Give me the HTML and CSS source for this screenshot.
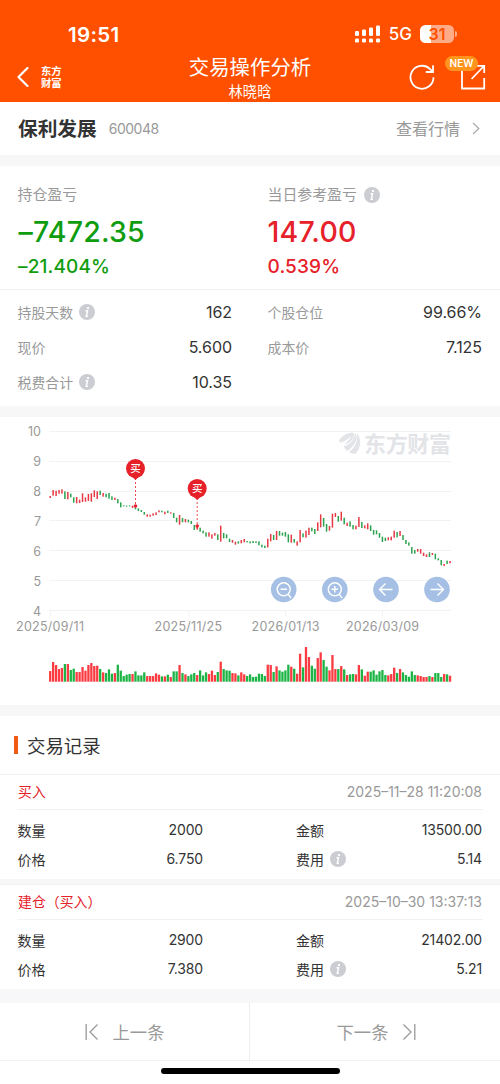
FILE: index.html
```html
<!DOCTYPE html>
<html lang="zh-CN">
<head>
<meta charset="utf-8">
<title>交易操作分析</title>
<link rel="stylesheet" href="styles.css">
</head>
<body>
<svg width="0" height="0" class="defs">
  <symbol id="info" viewBox="0 0 16 16">
    <circle cx="8" cy="8" r="8" fill="#cbcdd2"/>
    <circle cx="9" cy="4.1" r="1.2" fill="#fff"/>
    <path d="M6.5 6.8H8.5L7.3 12.2H9" fill="none" stroke="#fff" stroke-width="1.5"/>
  </symbol>
</svg>
<header class="header">
  <div class="status">
    <span class="time">19:51</span>
    <div class="status-right">
      <svg width="26" height="18" viewBox="0 0 26 18" fill="#fff">
        <rect x="0" y="6" width="4" height="5" rx="1.2"/><rect x="7" y="4.4" width="4" height="6.6" rx="1.2"/><rect x="14" y="2.6" width="4" height="8.4" rx="1.2"/><rect x="21" y="0.6" width="4" height="10.4" rx="1.2"/>
        <rect x="0" y="13.4" width="4" height="4.2" rx="1.3"/><rect x="7" y="13.4" width="4" height="4.2" rx="1.3"/><rect x="14" y="13.4" width="4" height="4.2" rx="1.3"/><rect x="21" y="13.4" width="4" height="4.2" rx="1.3"/>
      </svg>
      <span class="net">5G</span>
      <div class="battery"><span>31</span></div>
      <i class="battery-tip"></i>
    </div>
  </div>
  <div class="nav">
    <div class="nav-left">
      <svg width="12" height="20" viewBox="0 0 12 20" fill="none" stroke="#fff" stroke-width="2.2" stroke-linecap="round" stroke-linejoin="round"><path d="M10.5 1L1.5 10L10.5 19"/></svg>
      <div class="brand"><span>东方</span><span>财富</span></div>
    </div>
    <div class="nav-title">
      <h1>交易操作分析</h1>
      <p>林晓晗</p>
    </div>
    <div class="nav-right">
      <svg width="26" height="26" viewBox="0 0 26 26" fill="none" stroke="#fff" stroke-width="1.8"><path d="M24.5 13.2A11.5 11.5 0 1 1 20.8 4.8L23.6 7.4"/><path d="M24 1.2V8H16.8"/></svg>
      <div class="share">
        <svg width="26" height="26" viewBox="0 0 26 26" fill="none" stroke="#fff" stroke-width="1.8"><path d="M2 5V24.5H24.2V14"/><path d="M11.5 15L24 2M17 1.8H24.2V9"/></svg>
        <span class="new">NEW</span>
      </div>
    </div>
  </div>
</header>

<section class="stock">
  <h2>保利发展</h2><span class="code">600048</span>
  <a class="quote">查看行情</a>
  <svg width="8" height="13" viewBox="0 0 8 13" fill="none" stroke="#aaa" stroke-width="1.2"><path d="M1 1L6.8 6.5L1 12"/></svg>
</section>

<section class="summary">
  <div class="profit">
    <div class="col">
      <div class="label">持仓盈亏</div>
      <div class="big green">–7472.35</div>
      <div class="mid green">–21.404%</div>
    </div>
    <div class="col">
      <div class="label">当日参考盈亏<svg class="info"><use href="#info"/></svg></div>
      <div class="big red">147.00</div>
      <div class="mid red">0.539%</div>
    </div>
  </div>
  <div class="stats">
    <div class="stat"><span>持股天数</span><svg class="info"><use href="#info"/></svg><b>162</b></div>
    <div class="stat"><span>个股仓位</span><b>99.66%</b></div>
    <div class="stat"><span>现价</span><b>5.600</b></div>
    <div class="stat"><span>成本价</span><b>7.125</b></div>
    <div class="stat"><span>税费合计</span><svg class="info"><use href="#info"/></svg><b>10.35</b></div>
  </div>
</section>

<section class="chart">
  <svg id="chart" width="500" height="288" viewBox="0 417 500 288">
    <g stroke="#f2f2f2"><path d="M49 431.5H451M49 461.5H451M49 491.5H451M49 520.5H451M49 550.5H451M49 580.5H451M49 610.5H451"/><path d="M50.5 610V616M189 610V616M285.5 610V616M382.5 610V616"/></g>
    <g class="axis" text-anchor="end">
      <text x="41" y="436">10</text><text x="41" y="466">9</text><text x="41" y="496">8</text><text x="41" y="525.5">7</text><text x="41" y="555.5">6</text><text x="41" y="585.5">5</text><text x="41" y="615.5">4</text>
    </g>
    <g class="axis">
      <text x="16" y="631" textLength="68">2025/09/11</text><text x="154.500" y="631" textLength="67.500">2025/11/25</text><text x="251.500" y="631" textLength="68">2026/01/13</text><text x="346" y="631" textLength="73">2026/03/09</text>
    </g>
    <g fill="#e3e4e8">
      <path d="M339 440C344 434 350 432 354 433C355 438 350 444 345 444C347 442 350 439 351 436C347 440 343 442 340 443Z"/>
      <path d="M355 433C359 436 356 446 347 451C345 449 344 447 344 446C350 445 355 439 355 433Z"/>
      <path d="M357 433C362 439 361 449 355 454C353 454 351 453 349 452C355 448 358 441 357 433Z"/>
      <text class="watermark" x="364" y="452" textLength="87">东方财富</text>
    </g>
    <g id="candles"></g>
    <g id="volume"></g>
    <g class="marker">
      <path d="M135.500 478V507M197.200 498V526" stroke="#e84a50" stroke-dasharray="2 2"/>
      <path d="M129 474L135.500 480L142 474ZM190.700 494L197.200 500L203.700 494Z" fill="#e6212a"/>
      <circle cx="135.500" cy="468.500" r="9.500"/><circle cx="197.200" cy="488.500" r="9.500"/>
      <circle cx="135.500" cy="506" r="1.800"/><circle cx="197.200" cy="526" r="1.800"/>
      <text x="135.500" y="472.300">买</text><text x="197.200" y="492.300">买</text>
    </g>
    <g fill="#a5c0e4"><circle cx="283.700" cy="589.500" r="12.800"/><circle cx="334.800" cy="589.500" r="12.800"/><circle cx="386" cy="589.500" r="12.800"/><circle cx="437" cy="589.500" r="12.800"/></g>
    <g fill="none" stroke="#fff" stroke-width="1.400">
      <circle cx="283.700" cy="589.300" r="6.500"/><path d="M280.500 589.300H287M288.300 594.300L291 598"/>
      <circle cx="334.800" cy="589.300" r="6.500"/><path d="M331.500 589.300H338M334.800 586V592.600M339.400 594.300L342 598"/>
      <path d="M392.500 589.500H379.800M385.500 583.500L379.500 589.500L385.500 595.500"/>
      <path d="M430.500 589.500H443.200M437.500 583.500L443.500 589.500L437.500 595.500"/>
    </g>
  </svg>
</section>

<section class="records">
  <h3>交易记录</h3>
  <article class="record">
    <div class="record-head"><span>买入</span><time>2025–11–28 11:20:08</time></div>
    <div class="record-body">
      <div class="pair"><span>数量</span><b>2000</b></div><div class="pair"><span>金额</span><b>13500.00</b></div>
      <div class="pair"><span>价格</span><b>6.750</b></div><div class="pair"><span>费用</span><svg class="info"><use href="#info"/></svg><b>5.14</b></div>
    </div>
  </article>
  <article class="record">
    <div class="record-head"><span>建仓（买入）</span><time>2025–10–30 13:37:13</time></div>
    <div class="record-body">
      <div class="pair"><span>数量</span><b>2900</b></div><div class="pair"><span>金额</span><b>21402.00</b></div>
      <div class="pair"><span>价格</span><b>7.380</b></div><div class="pair"><span>费用</span><svg class="info"><use href="#info"/></svg><b>5.21</b></div>
    </div>
  </article>
</section>

<footer class="pager">
  <div class="page-btn prev"><svg width="14" height="18" viewBox="0 0 14 18" fill="none" stroke="#999" stroke-width="1.300"><path d="M1.200 1V17M12.500 1.500L5 9L12.500 16.500"/></svg><span>上一条</span></div>
  <div class="page-btn next"><span>下一条</span><svg width="14" height="18" viewBox="0 0 14 18" fill="none" stroke="#999" stroke-width="1.300"><path d="M12.800 1V17M1.500 1.500L9 9L1.500 16.500"/></svg></div>
</footer>
<div class="home"><i></i></div>
<script src="chart.js"></script>
</body>
</html>
```
FILE: styles.css
```css
* { box-sizing: border-box; margin: 0; padding: 0; }
body {
  width: 500px;
  height: 1084px;
  overflow: hidden;
  background: #fff;
  color: #333;
  font-family: Inter, "Noto Sans CJK SC", sans-serif;
  font-size: 14px;
}
h1, h2, h3, b { font-weight: 400; }
svg { display: block; flex: none; }
.defs { position: absolute; }
.info { width: 16px; height: 16px; margin-left: 6px; }
.label .info { margin-left: 7px; }
.green { color: #0f9d0f; }
.red { color: #e6212a; }

.header { height: 102px; background: #ff5000; color: #fff; }
.status { display: flex; justify-content: space-between; align-items: center; height: 52px; padding: 16px 43px 0 68px; }
.time { font-size: 20.5px; font-weight: 600; letter-spacing: 0.3px; }
.status-right { display: flex; align-items: center; }
.net { margin-left: 8px; font-size: 17px; font-weight: 500; line-height: 20px; }
.battery {
  width: 34px; height: 18px; margin-left: 8px; border-radius: 5.5px;
  background: linear-gradient(90deg, #fff 31%, #ffab88 31%);
  color: #ff5000; text-align: center; font-size: 16px; line-height: 18px; font-weight: 600;
}
.battery-tip { width: 2px; height: 6px; margin-left: 1px; border-radius: 0 2px 2px 0; background: #ffab88; }
.nav { display: grid; grid-template-columns: 150px 200px 150px; height: 50px; }
.nav-left { display: flex; align-items: center; padding-left: 17px; gap: 12px; }
.brand { display: grid; grid-auto-rows: 12px; font-family: "Noto Sans CJK SC", sans-serif; font-size: 10.3px; line-height: 12px; font-weight: 700; }
.nav-title { padding-top: 1px; text-align: center; }
.nav-title h1 { font-size: 20.4px; line-height: 29px; }
.nav-title p { font-size: 14.3px; line-height: 19px; }
.nav-right { display: flex; justify-content: space-between; padding: 12px 14px 0 59px; }
.share { position: relative; }
.new {
  position: absolute; left: -15px; top: -8px; width: 33px; height: 15px; border-radius: 8px;
  background: #ff951c; font-size: 10px; line-height: 15px; font-weight: 600; text-align: center;
}

.stock { display: flex; align-items: center; height: 53px; padding: 0 20px 0 18px; }
.stock h2 { padding-bottom: 2px; font-size: 19.7px; font-weight: 700; }
.code { margin-left: 12px; color: #999; font-size: 14px; letter-spacing: -0.5px; }
.quote { margin-left: auto; margin-right: 12px; padding-bottom: 1px; color: #999; font-size: 16px; }

.summary { height: 262px; border-top: 11px solid #f7f7f8; border-bottom: 11px solid #f7f7f8; }
.profit { display: grid; grid-template-columns: 250px 250px; height: 124px; padding-top: 18px; border-bottom: 1px solid #f3f3f3; }
.col { padding-left: 17.500px; }
.label { display: flex; align-items: center; height: 22px; font-size: 14.900px; line-height: 20px; color: #999; }
.label { padding-bottom: 1px; }
.big { height: 51px; line-height: 51px; font-size: 28.500px; font-weight: 500; letter-spacing: 0.200px; }
.mid { height: 20px; line-height: 20px; font-size: 19px; font-weight: 500; letter-spacing: 0.150px; }
.big.green { padding-left: 1px; }
.mid.green { padding-left: 0.500px; }
.stats { display: grid; grid-template-columns: 250px 250px; grid-auto-rows: 34.900px; padding-top: 5px; }
.stat { display: flex; align-items: center; padding: 0 18px 0 17.500px; font-size: 13.900px; color: #999; }
.stat b, .pair b { margin-left: auto; color: #333; }
.stat b { font-size: 16px; letter-spacing: -0.050px; }

.chart { height: 299px; border-bottom: 11px solid #f7f7f8; }
.chart text { font-family: Inter, "Noto Sans CJK SC", sans-serif; }
.axis { font-size: 12.500px; fill: #999; }
.chart .watermark { font-size: 22px; font-weight: 700; }
.marker { fill: #e6212a; }
.marker text { font-size: 10.500px; font-weight: 500; fill: #fff; text-anchor: middle; }
.up { fill: #e63a45; }
.down { fill: #2ba34e; }
#volume .up { fill: #fa3b41; }
#volume .down { fill: #1cb545; }

.records h3 { display: flex; align-items: center; height: 58px; padding-left: 14px; font-size: 18.400px; }
.records h3::before { content: ""; width: 4px; height: 18px; margin-right: 9px; background: #f05a14; }
.record { height: 110px; border-top: 1px solid #f2f2f2; border-bottom: 5px solid #f7f7f8; }
.record:last-child { height: 105px; border-bottom: 0; }
.record-head { display: flex; justify-content: space-between; align-items: center; height: 35px; margin: 0 17px; padding: 0 1px 2px; border-bottom: 1px solid #f2f2f2; font-size: 13.900px; color: #e6212a; }
.record-head time { color: #999; font-size: 14px; }
.record-body { display: grid; grid-template-columns: 203px 1fr; column-gap: 93px; grid-auto-rows: 29px; padding: 5px 18px 0 0; }
.pair { display: flex; align-items: center; font-size: 14px; }
.pair:nth-child(odd) { padding-left: 17.500px; }
.pair b { font-size: 14px; letter-spacing: -0.150px; }

.pager { display: grid; grid-template-columns: 1fr 1fr; height: 72px; border-top: 14px solid #f7f7f9; border-bottom: 1px solid #f2f2f2; color: #999; font-size: 17.300px; }
.page-btn { display: flex; align-items: center; justify-content: center; gap: 14px; }
.prev { border-right: 1px solid #eee; }
.next { padding-left: 3px; }
.home { display: flex; justify-content: center; padding-top: 7px; }
.home i { width: 179px; height: 6px; border-radius: 3px; background: #000; }
```
FILE: chart.js
```js
const NS = 'http://www.w3.org/2000/svg';
const START = 50.2;
const STEP = 2.94;

// Daily rows: direction, candle offset top and bottom, volume; all in thirds of a pixel.
const days = `R228-234,32 R210-227,59 R212-228,50 R210-221,38 R208-221,41 G214-237,53 R216-238,53 G221-232,35 G232-248,39 R231-250,29
R239-249,29 R220-246,44 R232-245,33 R222-243,50 R220-245,56 R211-231,47 R214-237,48 G212-225,38 R219-230,28 G221-232,26
G219-236,37 G229-240,24 R233-240,26 G237-250,51 G247-262,33 G256-259,17 G257-260,21 G256-259,23 R257-264,23 G262-268,31
G265-273,19 G270-276,19 G276-284,28 R283-290,17 R284-290,17 R280-287,17 R277-285,25 R271-277,21 G272-277,16 R275-283,16
G272-279,21 R277-281,14 G279-294,31 G293-307,31 R285-314,50 G294-307,26 R297-307,22 G299-307,17 G303-312,22 G315-330,26
R316-329,20 G323-335,34 G332-340,19 G337-350,28 R337-350,23 R343-356,33 R339-347,20 G343-360,29 R317-365,60 G339-355,38
G343-355,34 G356-366,33 R360-368,26 R365-374,25 G364-371,19 R360-370,28 R357-367,22 G363-367,17 G364-370,22 G363-369,14
G364-369,15 G364-376,24 G374-382,23 G377-384,17 R356-382,51 R342-364,50 G345-360,29 R333-360,46 G333-347,34 G338-347,30
G336-350,34 G343-367,51 R344-368,45 G357-368,39 R364-377,24 R330-367,84 G340-352,43 R332-353,104 R323-345,74 G323-334,48
G327-342,39 R307-333,71 R283-322,88 G294-320,65 G312-335,45 R318-332,34 R281-323,80 R279-291,38 G288-305,38 R275-302,47
G293-313,37 R308-318,20 G304-320,22 G315-328,23 R317-328,22 R291-321,50 G306-324,37 R316-325,18 R310-328,30 G316-333,30
G330-344,34 G331-343,21 G339-353,31 G350-366,35 G353-363,20 R352-361,19 R350-361,23 R332-353,42 G336-352,26 R333-348,38
G345-360,28 G360-372,20 G367-377,15 G381-401,31 G390-401,20 R387-395,19 R387-401,17 R398-408,14 R403-411,14 G397-411,17
R399-405,14 G401-418,26 G415-421,26 G420-436,14 R432-438,23 G422-432,22 R423-430,18`.trim().split(/\s+/);

function bar(group, kind, x, y, width, height) {
  const rect = document.createElementNS(NS, 'rect');
  rect.setAttribute('class', kind);
  rect.setAttribute('x', x - width / 2);
  rect.setAttribute('y', y);
  rect.setAttribute('width', width);
  rect.setAttribute('height', height);
  group.appendChild(rect);
}

const candles = document.getElementById('candles');
const volume = document.getElementById('volume');
days.forEach((day, i) => {
  const [, dir, top, bottom, vol] = day.match(/([RG])(\d+)-(\d+),(\d+)/);
  const kind = dir === 'R' ? 'up' : 'down';
  const x = START + i * STEP;
  bar(candles, kind, x, 420 + top / 3, 1.5, (bottom - top) / 3);
  bar(volume, kind, x, 681.7 - vol / 3, 2.3, vol / 3);
});
```
